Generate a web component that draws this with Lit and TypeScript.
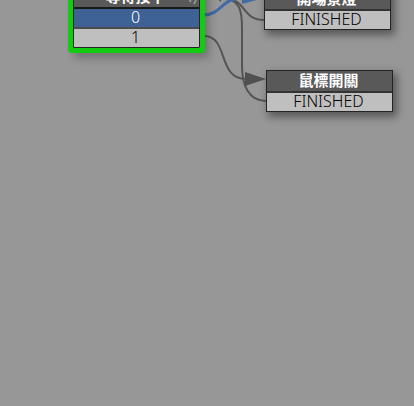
import { LitElement, html, css, nothing } from "lit";
import { customElement, property } from "lit/decorators.js";
import { classMap } from "lit/directives/class-map.js";
import { styleMap } from "lit/directives/style-map.js";

interface StateData {
  title: string;
  x: number;
  y: number;
  events: { name: string; current?: boolean }[];
  active?: boolean;
}

const STATES: StateData[] = [
  { title: "等待按下", x: 73, y: -14, active: true, events: [{ name: "0", current: true }, { name: "1" }] },
  { title: "開場景燈", x: 264, y: -12, events: [{ name: "FINISHED" }] },
  { title: "鼠標開關", x: 266, y: 70, events: [{ name: "FINISHED" }] },
];

@customElement("state-node")
export class StateNode extends LitElement {
  @property({ attribute: false }) data!: StateData;

  static styles = css`
    :host {
      display: block;
    }
    .node {
      width: 127px;
      box-sizing: border-box;
      border: 1px solid #242424;
      box-shadow: 3px 4px 8px 1px rgba(0, 0, 0, 0.42);
      text-align: center;
    }
    .active {
      box-shadow: 0 0 0 5px #12cc12, 5px 6px 8px 4px rgba(0, 0, 0, 0.25);
      border-radius: 1px;
    }
    .title {
      position: relative;
      height: 20px;
      padding-right: 2px;
      background: #595959;
      color: #fff;
      border-bottom: 2px solid #333;
      font: bold 15px/18px "Noto Sans CJK TC", sans-serif;
    }
    .active .title {
      border-bottom-color: #191919;
    }
    .event {
      height: 18px;
      padding-right: 2px;
      background: #bfbfbf;
      color: #000;
      font: 300 16px/16px "Noto Sans", sans-serif;
    }
    .event + .event {
      border-top: 2px solid #4c4c50;
    }
    .event.current {
      background: #3f6294;
      color: #fff;
    }
    .grip {
      position: absolute;
      right: 1px;
      bottom: 2px;
    }
  `;

  render() {
    const { title, active, events } = this.data;
    return html`
      <div class=${classMap({ node: true, active: !!active })}>
        <div class="title">
          ${title}
          ${active
            ? html`<svg class="grip" width="10" height="10" viewBox="0 0 10 10" aria-hidden="true">
                <path d="M1 4L3 7M4 2L2 6M9 3L6 9" stroke="#929292" stroke-width="1.8" fill="none" />
              </svg>`
            : nothing}
        </div>
        ${events.map((e) => html`<div class=${classMap({ event: true, current: !!e.current })}>${e.name}</div>`)}
      </div>
    `;
  }
}

@customElement("app-root")
export class AppRoot extends LitElement {
  static styles = css`
    :host {
      display: block;
    }
    .canvas {
      position: relative;
      min-height: 100vh;
      overflow: hidden;
      background: #979797;
    }
    .links {
      position: absolute;
      top: 0;
      left: 0;
      width: 100%;
      height: 100%;
      fill: none;
      stroke-width: 2;
    }
    .link {
      stroke: #555;
    }
    .live {
      stroke: #426aa5;
      stroke-width: 3;
    }
    .head {
      fill: #505050;
    }
    .live-head {
      fill: #426aa5;
    }
    .place {
      position: absolute;
    }
  `;

  render() {
    return html`
      <main class="canvas">
        <svg class="links" aria-hidden="true">
          <path class="link" d="M204 36C229 36 217 79 246 79" />
          <path class="link" d="M264 20C242 20 246 -1 226 -1" />
          <path class="link" d="M266 101C248 101 242 84 242 66L242 28C242 12 240 2 228 -1" />
          <path class="live" d="M204 15C220 15 222 0 236 -1" />
          <path class="head" d="M245 72L266 79L245 86z" />
          <path class="head" d="M214 -4L221 -4L221 2z" />
          <path class="live-head" d="M242 -8L264 -2L242 4z" />
        </svg>
        ${STATES.map(
          (s) => html`<state-node
            class="place"
            style=${styleMap({ left: `${s.x}px`, top: `${s.y}px` })}
            .data=${s}
          ></state-node>`,
        )}
      </main>
    `;
  }
}
